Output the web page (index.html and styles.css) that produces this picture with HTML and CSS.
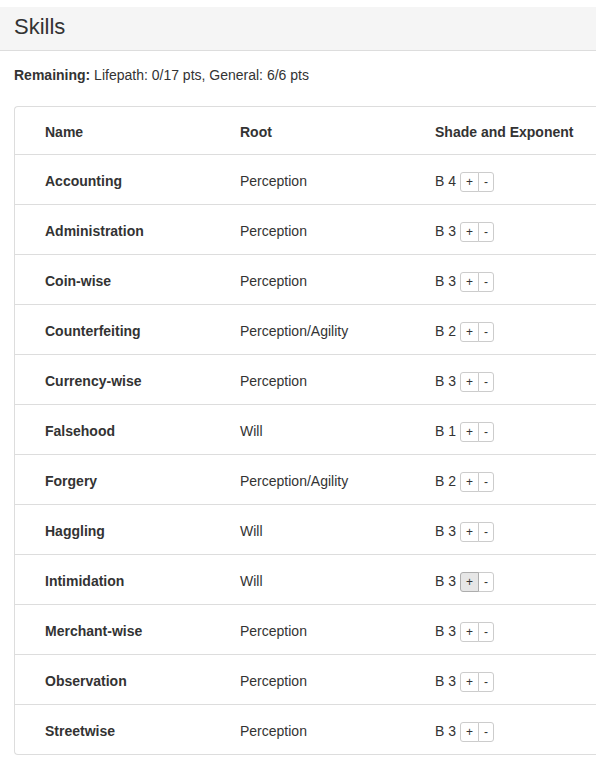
FILE: index.html
```html
<!DOCTYPE html>
<html>
<head>
<meta charset="utf-8">
<link rel="stylesheet" href="styles.css">
</head>
<body>
<div class="page">
  <div class="panel-heading"><h3 class="title">Skills</h3></div>
  <p class="remaining"><b>Remaining:</b> Lifepath: 0/17 pts, General: 6/6 pts</p>
  <div class="card">
    <table class="skills">
      <colgroup><col class="c"><col class="c"><col class="c3"></colgroup>
      <thead>
        <tr><th>Name</th><th>Root</th><th>Shade and Exponent</th></tr>
      </thead>
      <tbody>
        <tr><td class="name">Accounting</td><td>Perception</td><td><span class="val">B 4</span><span class="btns"><span class="btn">+</span><span class="btn">-</span></span></td></tr>
        <tr><td class="name">Administration</td><td>Perception</td><td><span class="val">B 3</span><span class="btns"><span class="btn">+</span><span class="btn">-</span></span></td></tr>
        <tr><td class="name">Coin-wise</td><td>Perception</td><td><span class="val">B 3</span><span class="btns"><span class="btn">+</span><span class="btn">-</span></span></td></tr>
        <tr><td class="name">Counterfeiting</td><td>Perception/Agility</td><td><span class="val">B 2</span><span class="btns"><span class="btn">+</span><span class="btn">-</span></span></td></tr>
        <tr><td class="name">Currency-wise</td><td>Perception</td><td><span class="val">B 3</span><span class="btns"><span class="btn">+</span><span class="btn">-</span></span></td></tr>
        <tr><td class="name">Falsehood</td><td>Will</td><td><span class="val">B 1</span><span class="btns"><span class="btn">+</span><span class="btn">-</span></span></td></tr>
        <tr><td class="name">Forgery</td><td>Perception/Agility</td><td><span class="val">B 2</span><span class="btns"><span class="btn">+</span><span class="btn">-</span></span></td></tr>
        <tr><td class="name">Haggling</td><td>Will</td><td><span class="val">B 3</span><span class="btns"><span class="btn">+</span><span class="btn">-</span></span></td></tr>
        <tr><td class="name">Intimidation</td><td>Will</td><td><span class="val">B 3</span><span class="btns"><span class="btn hover">+</span><span class="btn">-</span></span></td></tr>
        <tr><td class="name">Merchant-wise</td><td>Perception</td><td><span class="val">B 3</span><span class="btns"><span class="btn">+</span><span class="btn">-</span></span></td></tr>
        <tr><td class="name">Observation</td><td>Perception</td><td><span class="val">B 3</span><span class="btns"><span class="btn">+</span><span class="btn">-</span></span></td></tr>
        <tr><td class="name">Streetwise</td><td>Perception</td><td><span class="val">B 3</span><span class="btns"><span class="btn">+</span><span class="btn">-</span></span></td></tr>
      </tbody>
    </table>
  </div>
</div>
</body>
</html>
```

FILE: styles.css
```css
html, body {
  margin: 0;
  padding: 0;
  background: #fff;
  overflow: hidden;
}
body {
  font-family: "Liberation Sans", Arial, sans-serif;
  font-size: 14px;
  color: #333;
  line-height: 1.42857;
}
.page {
  padding-top: 7px;
  width: 596px;
}
.panel-heading {
  background: #f5f5f5;
  border-bottom: 1px solid #ddd;
  padding: 0 14px 3px 14px;
  box-sizing: border-box;
  height: 44px;
  display: flex;
  align-items: center;
}
.title {
  margin: 0;
  font-size: 22px;
  font-weight: normal;
  color: #333;
}
.remaining {
  margin: 14px 14px 0 14px;
  line-height: 20px;
}
.card {
  margin: 21px 0 0 14px;
  border: 1px solid #ddd;
  border-right: none;
  border-radius: 4px 0 0 4px;
  width: 600px;
}
.skills {
  border-collapse: collapse;
  table-layout: fixed;
  width: 600px;
}
.skills col.c {
  width: 195px;
}
.skills col.c3 {
  width: 210px;
}
.skills th, .skills td {
  text-align: left;
  padding: 5px 0 0 30px;
  height: 44px;
  vertical-align: middle;
  white-space: nowrap;
}
.skills th {
  height: 42px;
  font-weight: bold;
}
.skills tbody tr td {
  border-top: 1px solid #ddd;
}
.skills td.name {
  font-weight: bold;
}
.val {
  display: inline-block;
  vertical-align: middle;
}
.btns {
  display: inline-flex;
  vertical-align: middle;
  margin-left: 4px;
}
.btn {
  display: inline-block;
  height: 18px;
  line-height: 18px;
  padding: 0 5px;
  text-align: center;
  font-size: 12px;
  border: 1px solid #ccc;
  background: #fff;
  color: #333;
}
.btn:first-child {
  border-radius: 3px 0 0 3px;
}
.btn:last-child {
  border-radius: 0 3px 3px 0;
  margin-left: -1px;
}
.btn.hover {
  background: #e6e6e6;
  border-color: #adadad;
  position: relative;
  z-index: 1;
}
```
